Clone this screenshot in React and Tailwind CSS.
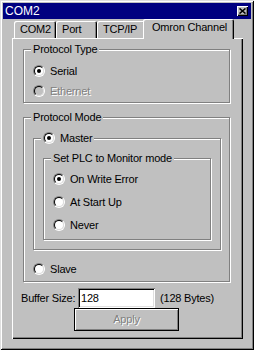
import React from "react";

const font = { fontFamily: '"Liberation Sans", Arial, sans-serif' };

const Radio = ({ checked, disabled }) => (
  <span className="block w-[12px] h-[12px] shrink-0 rounded-full border border-t-[#808080] border-l-[#808080] border-b-white border-r-white">
    <span
      className={`flex w-full h-full items-center justify-center rounded-full border border-t-black border-l-black border-b-[#dfdfdf] border-r-[#dfdfdf] ${
        disabled ? "bg-[#c0c0c0]" : "bg-white"
      }`}
    >
      {checked && <span className="block w-[4px] h-[4px] rounded-full bg-black" />}
    </span>
  </span>
);

const Option = ({ label, checked, disabled }) => (
  <div className="flex items-center gap-[5px] h-[12px]">
    <Radio checked={checked} disabled={disabled} />
    <span className={disabled ? "text-[#808080] [text-shadow:1px_1px_0_#fff]" : "text-black"}>{label}</span>
  </div>
);

const Group = ({ legend, className, children }) => (
  <div className={`relative border border-[#808080] shadow-[1px_1px_0_#fff,inset_1px_1px_0_#fff] ${className}`}>
    <div className="absolute -top-[8px] left-[7px] flex items-center gap-[5px] bg-[#c0c0c0] px-[2px] h-[14px]">
      {legend}
    </div>
    {children}
  </div>
);

const tabs = [
  { name: "COM2", w: "w-[42px]" },
  { name: "Port", w: "w-[41px]" },
  { name: "TCP/IP", w: "w-[48px]" },
];

export default function App() {
  return (
    <div
      style={font}
      className="w-[254px] h-[350px] p-[3px] bg-[#c0c0c0] text-[11px] tracking-[-0.2px] text-black shadow-[inset_1px_1px_0_#dfdfdf,inset_-1px_-1px_0_#000,inset_2px_2px_0_#fff,inset_-2px_-2px_0_#808080]"
    >
      {/* title bar */}
      <div className="flex h-[16px] items-center justify-between bg-[#000080] pl-[2px] pr-[3px]">
        <span className="text-[12px] text-white tracking-normal">COM2</span>
        <div className="flex w-[11px] h-[10px] items-center justify-center bg-[#c0c0c0] shadow-[inset_1px_1px_0_#fff,inset_-1px_-1px_0_#000,inset_-2px_-2px_0_#808080]">
          <svg width="7" height="6" viewBox="0 0 7 6">
            <path d="M0.5 0.5 L6.5 5.5 M6.5 0.5 L0.5 5.5" stroke="#000" strokeWidth="1.6" />
          </svg>
        </div>
      </div>

      {/* tabs */}
      <div className="flex h-[19px] items-end pl-[11px]">
        {tabs.map((t) => (
          <div
            key={t.name}
            className={`flex h-[17px] ${t.w} items-center pl-[6px] pb-[1px] rounded-t-[2px] shadow-[inset_1px_1px_0_#fff,inset_-1px_0_0_#000,inset_-2px_0_0_#808080]`}
          >
            {t.name}
          </div>
        ))}
        <div className="relative z-10 -ml-[2px] -mb-[1px] flex h-[20px] w-[91px] items-center pl-[9px] pb-[3px] rounded-t-[2px] bg-[#c0c0c0] shadow-[inset_1px_1px_0_#fff,inset_-1px_0_0_#000,inset_-2px_0_0_#808080]">
          Omron Channel
        </div>
      </div>

      {/* panel */}
      <div className="ml-[9px] flex h-[301px] w-[231px] flex-col pl-[11px] pt-[11px] shadow-[inset_1px_1px_0_#fff,inset_-1px_-1px_0_#000,inset_-2px_-2px_0_#808080]">
        <Group legend={<span>Protocol Type</span>} className="w-[207px] h-[54px] pl-[9px] pt-[15px]">
          <div className="flex flex-col gap-[8px]">
            <Option label="Serial" checked />
            <Option label="Ethernet" disabled />
          </div>
        </Group>

        <Group legend={<span>Protocol Mode</span>} className="mt-[14px] w-[207px] h-[165px] pl-[9px] pt-[20px]">
          <Group
            legend={
              <>
                <Radio checked />
                <span>Master</span>
              </>
            }
            className="w-[188px] h-[112px] pl-[9px] pt-[19px]"
          >
            <Group legend={<span>Set PLC to Monitor mode</span>} className="w-[168px] h-[82px] pl-[9px] pt-[14px]">
              <div className="flex flex-col gap-[11px]">
                <Option label="On Write Error" checked />
                <Option label="At Start Up" />
                <Option label="Never" />
              </div>
            </Group>
          </Group>
          <div className="mt-[13px]">
            <Option label="Slave" />
          </div>
        </Group>

        <div className="mt-[6px] -ml-[2px] flex h-[20px] items-center">
          <span className="w-[57px]">Buffer Size:</span>
          <div className="flex h-[20px] w-[77px] items-center bg-white pl-[3px] shadow-[inset_1px_1px_0_#808080,inset_-1px_-1px_0_#fff,inset_2px_2px_0_#000,inset_-2px_-2px_0_#dfdfdf]">
            128
          </div>
          <span className="ml-[5px]">(128 Bytes)</span>
        </div>

        <div className="ml-[51px] flex h-[23px] w-[105px] items-center justify-center border border-black shadow-[inset_1px_1px_0_#fff,inset_-1px_-1px_0_#808080]">
          <span className="text-[#808080] [text-shadow:1px_1px_0_#fff]">Apply</span>
        </div>
      </div>
    </div>
  );
}
